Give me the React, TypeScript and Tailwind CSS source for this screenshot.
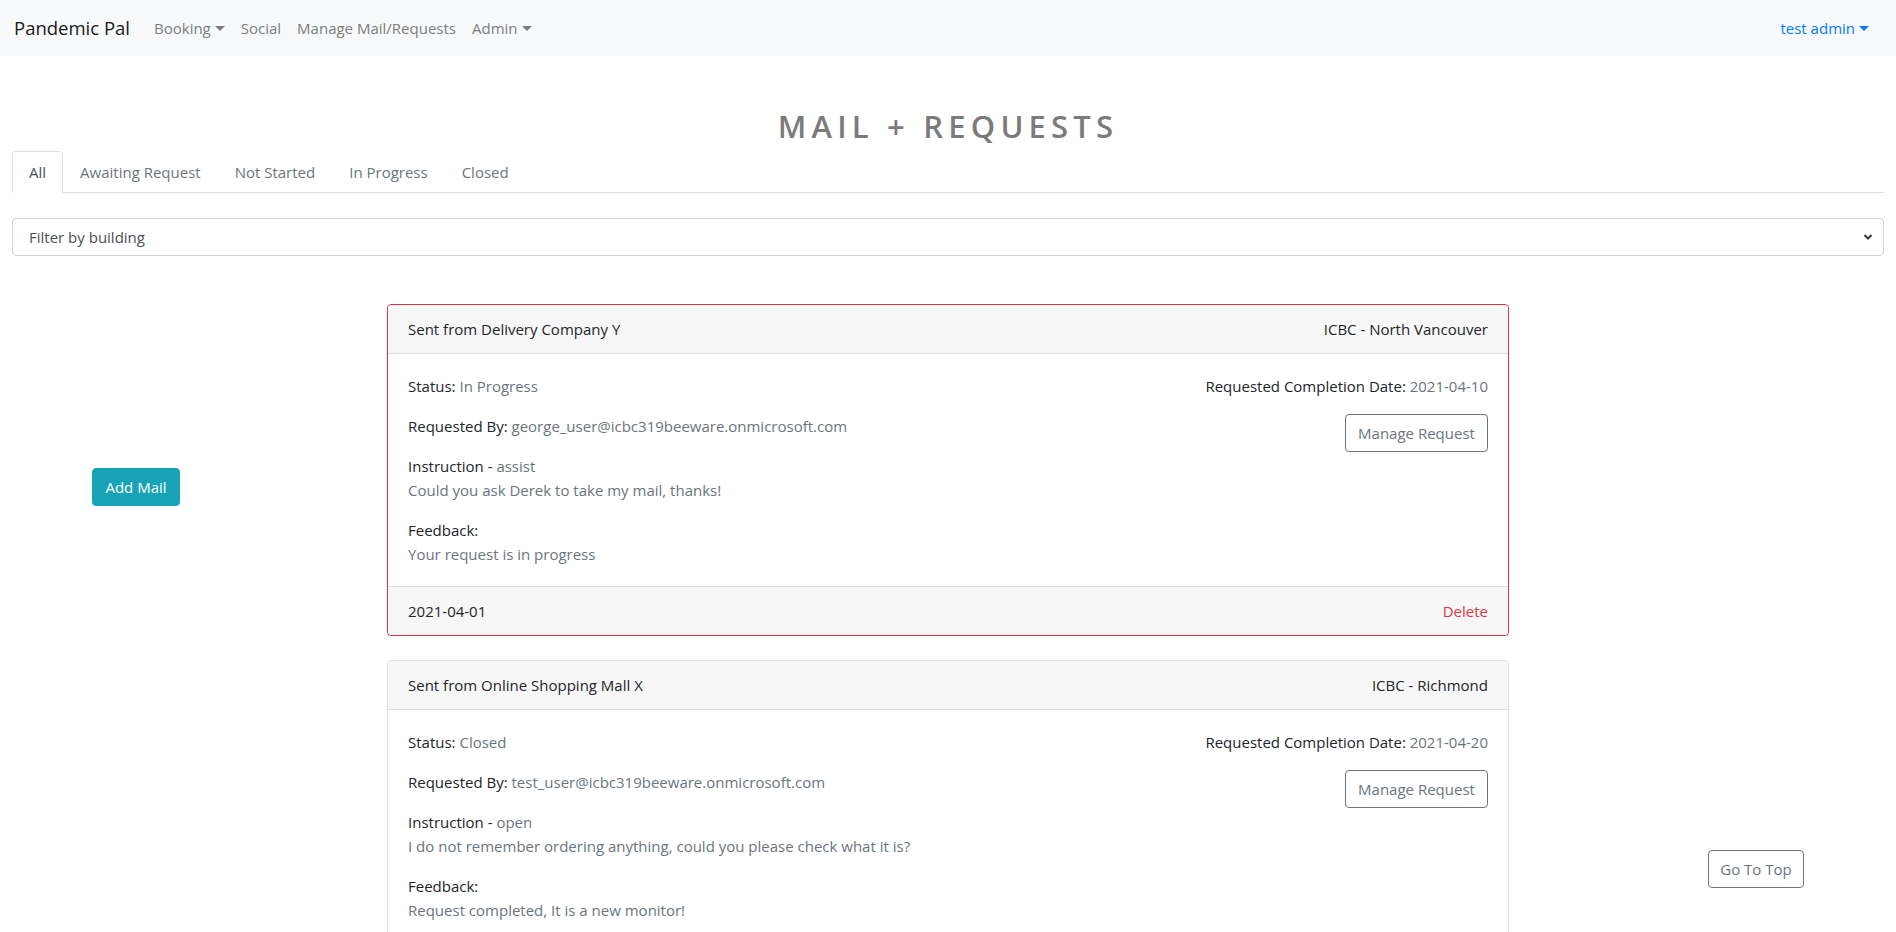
import React from "react";

const FONT = "font-['Open_Sans','Noto_Sans',sans-serif]";

function Caret() {
  return (
    <span className="ml-[4px] inline-block align-[3px] w-0 h-0 border-t-[5px] border-t-current border-x-[5px] border-x-transparent" />
  );
}

function Card({
  danger,
  from,
  building,
  status,
  by,
  instruction,
  instructionText,
  feedback,
  due,
  date,
}: {
  danger?: boolean;
  from: string;
  building: string;
  status: string;
  by: string;
  instruction: string;
  instructionText: string;
  feedback: string;
  due: string;
  date: string;
}) {
  return (
    <div
      className={
        "w-[1122px] mx-auto mb-6 rounded border " +
        (danger ? "border-[#dc3545]" : "border-[#dfdfdf]")
      }
    >
      <div className="flex justify-between px-5 py-3 bg-[#f7f7f7] border-b border-[#dcdcdc] rounded-t">
        <span>Sent from {from}</span>
        <span>{building}</span>
      </div>
      <div className="flex justify-between p-5">
        <div>
          <p className="mb-4">
            Status: <span className="text-[#6c757d]">{status}</span>
          </p>
          <p className="mb-4">
            Requested By: <span className="text-[#6c757d]">{by}</span>
          </p>
          <p className="mb-4">
            Instruction - <span className="text-[#6c757d]">{instruction}</span>
            <br />
            <span className="text-[#6c757d]">{instructionText}</span>
          </p>
          <p>
            Feedback:
            <br />
            <span className="text-[#6c757d]">{feedback}</span>
          </p>
        </div>
        <div className="flex flex-col items-end">
          <p className="mb-4">
            Requested Completion Date: <span className="text-[#6c757d]">{due}</span>
          </p>
          <button className="w-[143px] h-[38px] border border-[#6c757d] rounded text-[#6c757d] bg-white">
            Manage Request
          </button>
        </div>
      </div>
      <div className="flex justify-between px-5 py-3 bg-[#f7f7f7] border-t border-[#dcdcdc] rounded-b">
        <span>{date}</span>
        <span className="text-[#dc3545]">Delete</span>
      </div>
    </div>
  );
}

export default function App() {
  return (
    <div className={"min-h-screen bg-white text-[15px] leading-6 text-[#212529] " + FONT}>
      <nav className="h-14 bg-[#f8f9fa] flex items-center pl-[14px] pr-4">
        <span className="text-[18.5px] leading-[30px] text-[#1a1a1a] mr-4">Pandemic Pal</span>
        <div className="flex items-center text-[#7c7d7e]">
          <span className="px-2">
            Booking
            <Caret />
          </span>
          <span className="px-2">Social</span>
          <span className="px-2">Manage Mail/Requests</span>
          <span className="px-2">
            Admin
            <Caret />
          </span>
        </div>
        <div className="ml-auto pr-[11px] text-[#007bff]">
          test admin
          <Caret />
        </div>
      </nav>

      <div className="px-[12px]">
        <h1 className="mt-[51px] mb-[6px] text-center text-[31px] leading-[38px] font-semibold tracking-[5.2px] text-[#7b7b7b]">
          MAIL + REQUESTS
        </h1>

        <ul className="flex border-b border-[#dee2e6]">
          <li className="-mb-px px-4 py-2 border border-[#dee2e6] border-b-white bg-white rounded-t text-[#495057]">
            All
          </li>
          <li className="-mb-px px-4 py-2 border border-transparent text-[#6c757d]">Awaiting Request</li>
          <li className="-mb-px px-4 py-2 border border-transparent text-[#6c757d]">Not Started</li>
          <li className="-mb-px px-4 py-2 border border-transparent text-[#6c757d]">In Progress</li>
          <li className="-mb-px px-4 py-2 border border-transparent text-[#6c757d]">Closed</li>
        </ul>

        <div className="mt-[25px] h-[38px] flex items-center justify-between border border-[#ced4da] rounded pl-[16px] pr-3 text-[#495057]">
          <span>Filter by building</span>
          <svg width="10" height="8" viewBox="0 0 10 8" className="mr-[-2px]">
            <path d="M1.5 2 L5 5.5 L8.5 2" fill="none" stroke="#343a40" strokeWidth="2" />
          </svg>
        </div>

        <div className="mt-12">
          <Card
            danger
            from="Delivery Company Y"
            building="ICBC - North Vancouver"
            status="In Progress"
            by="george_user@icbc319beeware.onmicrosoft.com"
            instruction="assist"
            instructionText="Could you ask Derek to take my mail, thanks!"
            feedback="Your request is in progress"
            due="2021-04-10"
            date="2021-04-01"
          />
          <Card
            from="Online Shopping Mall X"
            building="ICBC - Richmond"
            status="Closed"
            by="test_user@icbc319beeware.onmicrosoft.com"
            instruction="open"
            instructionText="I do not remember ordering anything, could you please check what it is?"
            feedback="Request completed, It is a new monitor!"
            due="2021-04-20"
            date="2021-04-01"
          />
        </div>
      </div>

      <button className="fixed left-[92px] top-[468px] w-[88px] h-[38px] rounded bg-[#17a2b8] border border-[#17a2b8] text-white">
        Add Mail
      </button>
      <button className="fixed right-[92px] bottom-[44px] w-[96px] h-[38px] rounded bg-white border border-[#6c757d] text-[#6c757d]">
        Go To Top
      </button>
    </div>
  );
}
